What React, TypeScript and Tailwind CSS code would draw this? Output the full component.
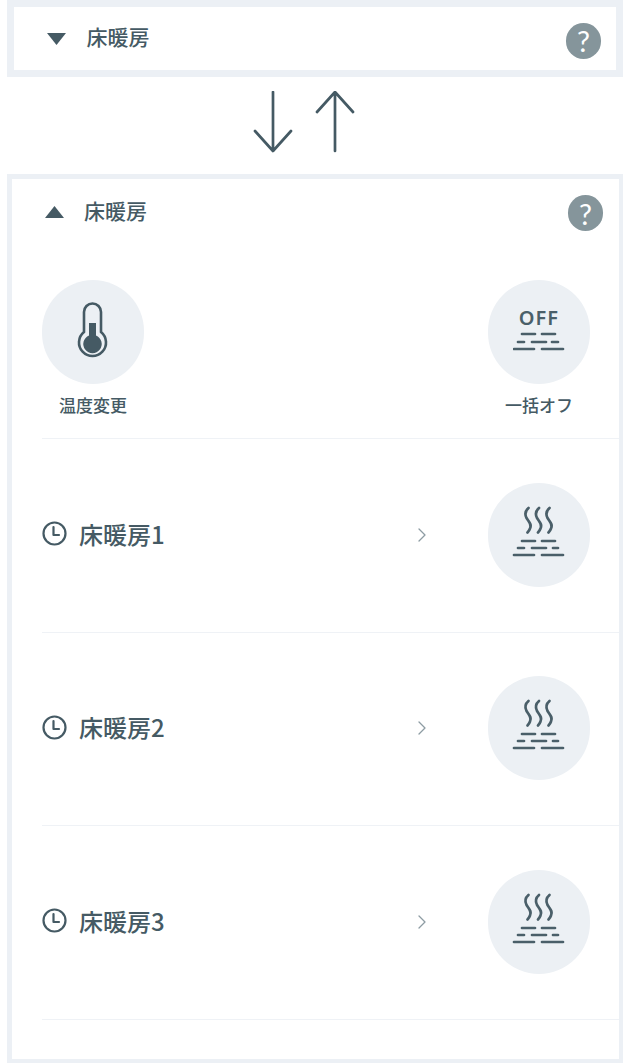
const textColor = "text-[#455a64]";

const Question = () => (
    <div className="flex h-[36px] w-[35px] items-center justify-center rounded-full bg-[#85959b] font-['Lato',sans-serif] text-[29px] leading-none text-white">
        ?
    </div>
);

const HeatIcon = () => (
    <svg viewBox="0 0 102 104" className="h-full w-full" fill="none" stroke="#4a5f69" strokeWidth="2.7" strokeLinecap="round">
        {[0, 10.5, 21].map((dx) => (
            <path
                key={dx}
                transform={`translate(${dx} 0)`}
                d="M40.5 25C37 28 36.5 31 38.5 35C41 39 44 41 42 45.5C41.5 47 40.5 48.5 39.5 49.5"
            />
        ))}
        <path d="M34 58H47M54 58H67M30 65H36M44 65H58M65 65H70M26 72H46M54 72H75" />
    </svg>
);

const ClockIcon = () => (
    <svg viewBox="0 0 25 25" className="h-[25px] w-[25px]" fill="none" stroke="#455a64" strokeWidth="2.2" strokeLinecap="round" strokeLinejoin="round">
        <circle cx="12.5" cy="12.5" r="11" />
        <path d="M11.5 6V14H17" />
    </svg>
);

const Row = ({ name }: { name: string }) => (
    <div className="flex h-[193.5px] items-center border-b border-[#eff2f6] pb-[1px] pr-[29px]">
        <div className="-translate-y-[1px]">
            <ClockIcon />
        </div>
        <span className={`ml-[12px] -translate-y-[1px] text-[24px] font-medium leading-none ${textColor}`}>{name}</span>
        <svg viewBox="0 0 10 16" className="ml-auto mr-[61px] h-[16px] w-[10px]" fill="none" stroke="#8d9ca3" strokeWidth="1.3" strokeLinecap="round" strokeLinejoin="round">
            <path d="M2 2L8 8L2 14" />
        </svg>
        <div className="h-[104px] w-[102px] rounded-full bg-[#ecf0f4]">
            <HeatIcon />
        </div>
    </div>
);

export default function App() {
    return (
        <div className="bg-white font-['Noto_Sans_CJK_JP','Noto_Sans',sans-serif]">
            <div className="mx-[7px] flex h-[77px] items-center border-x-[7.5px] border-y-[7px] border-[#ecf0f5] pl-[32.5px] pr-[15px]">
                <svg viewBox="0 0 19 12" className="h-[12px] w-[19px]" fill="#455a64">
                    <path d="M0 0H19L9.5 12Z" />
                </svg>
                <span className={`ml-[21px] -translate-y-[2px] text-[21px] font-medium leading-none ${textColor}`}>床暖房</span>
                <div className="ml-auto mt-[4px]">
                    <Question />
                </div>
            </div>

            <div className="flex h-[97px] items-start justify-center pr-[22px] pt-[14px]">
                <svg viewBox="0 0 102 62" className="h-[62px] w-[102px]" fill="none" stroke="#455a64" strokeWidth="2.7" strokeLinecap="round" strokeLinejoin="round">
                    <path d="M20 1V60M2 40L20 60L38 40" />
                    <path d="M82 60V1M64 21L82 1L100 21" />
                </svg>
            </div>

            <div className="mx-[7px] border-b-[4px] border-l-[5px] border-r-[4.5px] border-t-[5px] border-[#ecf0f5]">
                <div className="flex h-[66px] items-center pl-[33px] pr-[16px]">
                    <svg viewBox="0 0 19 12" className="h-[12px] w-[19px]" fill="#455a64">
                        <path d="M0 12H19L9.5 0Z" />
                    </svg>
                    <span className={`ml-[20px] -translate-y-[2px] text-[21px] font-medium leading-none ${textColor}`}>床暖房</span>
                    <div className="ml-auto mt-[2px]">
                        <Question />
                    </div>
                </div>

                <div className="pl-[30px]">
                    <div className="flex items-start justify-between border-b border-[#eff2f6] pb-[24px] pr-[29px] pt-[35px]">
                        <div className="flex w-[102px] flex-col items-center">
                            <div className="h-[104px] w-[102px] rounded-full bg-[#ecf0f4]">
                                <svg viewBox="0 0 102 104" className="h-full w-full" fill="none" stroke="#455a64" strokeWidth="2.6">
                                    <path d="M42 52V32a8.5 8.5 0 0 1 17 0V52a13.5 13.5 0 1 1 -17 0Z" />
                                    <path fill="#455a64" stroke="none" d="M47 43H54V55.5a9.2 9.2 0 1 1 -7 0Z" />
                                </svg>
                            </div>
                            <span className={`mt-[12px] text-[17px] font-medium leading-[18px] ${textColor}`}>温度変更</span>
                        </div>
                        <div className="flex w-[102px] flex-col items-center">
                            <div className="flex h-[104px] w-[102px] flex-col items-center rounded-full bg-[#ecf0f4] pt-[26px]">
                                <span className="font-['Noto_Sans',sans-serif] text-[20px] font-semibold leading-[24px] tracking-[1px] text-[#4a5f69]">
                                    OFF
                                </span>
                                <svg viewBox="0 0 52 20" className="mt-[1px] h-[20px] w-[52px]" fill="none" stroke="#4a5f69" strokeWidth="2.7" strokeLinecap="round">
                                    <path d="M9 3H22M29 3H42M5 11H11M19 11H33M39 11H45M1 18H21M29 18H50" />
                                </svg>
                            </div>
                            <span className={`mt-[12px] text-[17px] font-medium leading-[18px] ${textColor}`}>一括オフ</span>
                        </div>
                    </div>

                    <Row name="床暖房1" />
                    <Row name="床暖房2" />
                    <Row name="床暖房3" />
                    <div className="h-[39px]" />
                </div>
            </div>
        </div>
    );
}
